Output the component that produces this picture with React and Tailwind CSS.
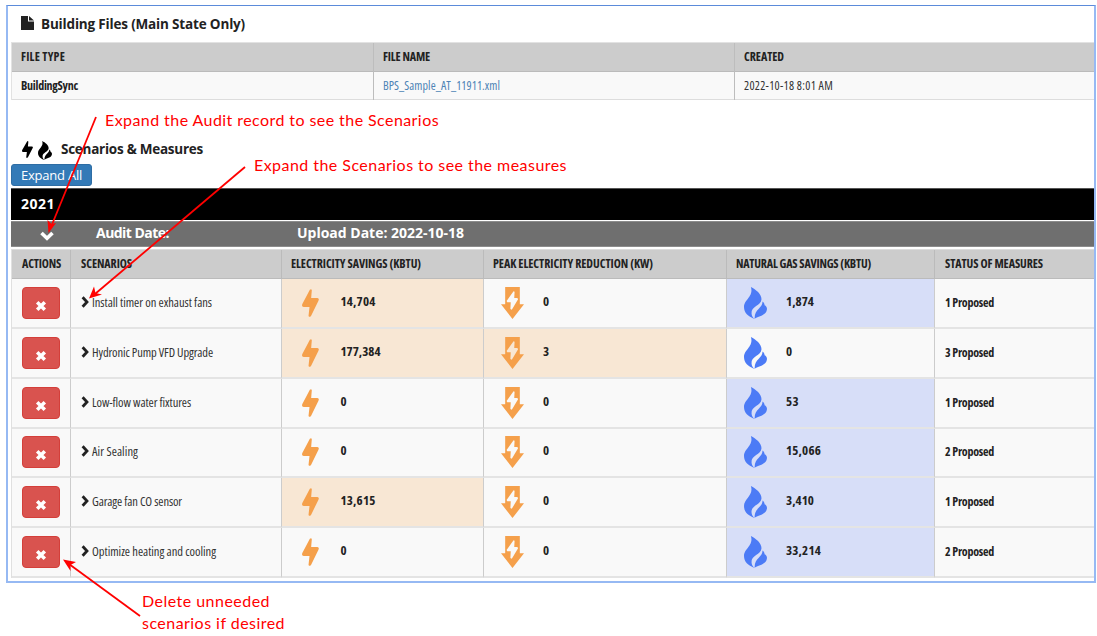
import React, { useLayoutEffect, useRef, useState } from "react";

/* Tracks a run of text so that it spans the given width. */
function Fit({ w, className = "", children }) {
  const ref = useRef(null);
  const [spacing, setSpacing] = useState(0);
  useLayoutEffect(() => {
    const natural = ref.current.getBoundingClientRect().width - spacing * children.length;
    setSpacing((w - natural) / children.length);
  }, [w, children]);
  return (
    <span ref={ref} className={"inline-block whitespace-nowrap " + className} style={{ letterSpacing: spacing }}>
      {children}
    </span>
  );
}

const Bolt = ({ className }) => (
  <svg viewBox="0 0 52 84" className={className} preserveAspectRatio="none">
    <path fill="currentColor" d="M24 2Q29-2 30 4L28 27H47Q54 28 50 36L28 80Q22 87 20 80L23 54H5Q-2 53 1 45Z" />
  </svg>
);

const Flame = ({ className }) => (
  <svg viewBox="0 0 67 97" className={className} preserveAspectRatio="none">
    <path fill="currentColor" d="M20 0C35 8 51 21 51 37C50 57 20 58 22 80C22 86 26 92 30 97C12 89 0 79 0 61C0 38 29 29 20 0Z" />
    <path fill="currentColor" d="M54 44C54 66 30 65 31 97C38 88 66 88 67 67C67 61 64 57 60 55C60 51 58 47 54 44Z" />
  </svg>
);

const DownBolt = ({ className }) => (
  <svg viewBox="0 0 66 96" className={className} preserveAspectRatio="none">
    <path fill="currentColor" fillRule="evenodd" d="M12 0H54V52H66L33 96L0 52H12ZM36 13L16 42L18 46H28L27 66L31 68L49 37L47 33H38L39 14Z" />
  </svg>
);

const Cross = () => (
  <svg viewBox="0 0 12 12" className="mt-[5px] h-3 w-3">
    <path d="M2.2 2.2L9.8 9.8M9.8 2.2L2.2 9.8" stroke="#fff" strokeWidth="3.5" />
  </svg>
);

const Chevron = () => (
  <svg viewBox="0 0 8 12" className="mr-[3px] mb-[19px] h-3 w-2">
    <path d="M1.6 1.2L6 6L1.6 10.8" fill="none" stroke="#222" strokeWidth="2.8" />
  </svg>
);

const NARROW = "[font-stretch:75%]";
const CELL = "flex shrink-0 items-end border-r border-b-2 border-r-[#ccc] border-b-[#e4e4e4]";

const rows = [
  { name: "Install timer on exhaust fans", nw: 120, h: "h-[50px]", e: "14,704", ew: 35, p: "0", g: "1,874", gw: 28, s: "1 Proposed" },
  { name: "Hydronic Pump VFD Upgrade", nw: 121, h: "h-[50px]", e: "177,384", ew: 40, p: "3", g: "0", gw: 7, s: "3 Proposed" },
  { name: "Low-flow water fixtures", nw: 99, h: "h-[50px]", e: "0", ew: 7, p: "0", g: "53", gw: 13, s: "1 Proposed" },
  { name: "Air Sealing", nw: 46, h: "h-[49px]", e: "0", ew: 7, p: "0", g: "15,066", gw: 35, s: "2 Proposed" },
  { name: "Garage fan CO sensor", nw: 90, h: "h-[50px]", e: "13,615", ew: 35, p: "0", g: "3,410", gw: 28, s: "1 Proposed" },
  { name: "Optimize heating and cooling", nw: 124, h: "h-[50px]", e: "0", ew: 7, p: "0", g: "33,214", gw: 35, s: "2 Proposed" },
];

const heads = [
  ["ACTIONS", 39, "w-[59px] pl-[10px]"],
  ["SCENARIOS", 51, "w-[211px] pl-[10px]"],
  ["ELECTRICITY SAVINGS (KBTU)", 130, "w-[202px] pl-[9px]"],
  ["PEAK ELECTRICITY REDUCTION (KW)", 160, "w-[243px] pl-[9px]"],
  ["NATURAL GAS SAVINGS (KBTU)", 135, "w-[208px] pl-[9px]"],
  ["STATUS OF MEASURES", 98, "w-[159px] pl-[10px]"],
];

function Value({ w, children }) {
  return <Fit w={w} className="mb-4 text-[13px] leading-5 font-bold">{children}</Fit>;
}

function ScenarioRow({ row }) {
  return (
    <div className={"flex bg-[#f9f9f9] " + row.h}>
      <div className={CELL + " w-[59px] pb-2 pl-[10px]"}>
        <button className="flex h-8 w-[38px] items-center justify-center rounded border border-[#d43f3a] bg-[#d9534f]">
          <Cross />
        </button>
      </div>
      <div className={CELL + " w-[211px] pl-[10px]"}>
        <Chevron />
        <Fit w={row.nw} className="mb-[14px] text-[12.5px] leading-5 text-[#333]">{row.name}</Fit>
      </div>
      <div className={CELL + " w-[202px] pl-[19.5px] " + (row.e !== "0" ? "bg-[#f8e7d4]" : "")}>
        <Bolt className="mr-[22px] mb-[10px] h-7 w-[17px] text-[#f5a04b]" />
        <Value w={row.ew}>{row.e}</Value>
      </div>
      <div className={CELL + " w-[243px] pl-[17px] " + (row.p !== "0" ? "bg-[#f8e7d4]" : "")}>
        <DownBolt className="mr-[19px] mb-2 h-8 w-[23px] text-[#f5a04b]" />
        <Value w={7}>{row.p}</Value>
      </div>
      <div className={CELL + " w-[208px] pl-[17px] " + (row.g !== "0" ? "bg-[#d7def8]" : "")}>
        <Flame className="mr-[19px] mb-2 h-8 w-[23px] text-[#4c7bf6]" />
        <Value w={row.gw}>{row.g}</Value>
      </div>
      <div className="flex w-[159px] items-end border-b-2 border-b-[#e4e4e4] pl-[10px]">
        <Fit w={49} className="mb-[14px] text-[12px] leading-5 font-bold">{row.s}</Fit>
      </div>
    </div>
  );
}

function FilesTable() {
  const columns = [
    ["FILE TYPE", 44, "BuildingSync", 57, "w-[362px]"],
    ["FILE NAME", 47, "BPS_Sample_AT_11911.xml", 117, "w-[361px]"],
    ["CREATED", 40, "2022-10-18 8:01 AM", 89, "w-[360px]"],
  ];
  return (
    <div className={"ml-[3px] flex h-[58px] border-t border-l border-[#e2e2e2] " + NARROW}>
      {columns.map(([head, hw, value, vw, width], i) => (
        <div key={head} className={"shrink-0 " + width + (i < 2 ? " border-r border-[#bdbdbd]" : "")}>
          <div className="flex h-[29px] items-center border-b border-[#bbb] bg-[#ccc] pl-[9px] text-[12px] font-bold">
            <Fit w={hw}>{head}</Fit>
          </div>
          <div className="flex h-7 items-center border-b border-[#ddd] bg-[#f9f9f9] pl-[9px] text-[12px]">
            <Fit w={vw} className={i === 0 ? "font-bold" : i === 1 ? "text-[#4d83b5]" : "text-[#333]"}>{value}</Fit>
          </div>
        </div>
      ))}
    </div>
  );
}

function Callouts() {
  return (
    <div className="font-['Lato',sans-serif] text-[16px] leading-[22px] text-[#f00]">
      <svg className="absolute top-0 left-0 h-[636px] w-[1097px]" viewBox="0 0 1097 636">
        <g stroke="#f00" strokeWidth="1.8">
          <path d="M96 117L51 227" />
          <path d="M245 167L95 294" />
          <path d="M140 616L69 564" />
        </g>
        <g fill="#f00">
          <path d="M48.500 233L47.500 220L51.500 224L56 223Z" />
          <path d="M89 298.500L94 286.500L95.500 293L102 294.500Z" />
          <path d="M63 559.500L76 562L70.500 565L70.500 571Z" />
        </g>
      </svg>
      <div className="absolute top-[109px] left-[105px]"><Fit w={334}>Expand the Audit record to see the Scenarios</Fit></div>
      <div className="absolute top-[154px] left-[254px]"><Fit w={313}>Expand the Scenarios to see the measures</Fit></div>
      <div className="absolute top-[590px] left-[142px] flex flex-col items-start">
        <Fit w={128}>Delete unneeded</Fit>
        <Fit w={143}>scenarios if desired</Fit>
      </div>
    </div>
  );
}

export default function App() {
  return (
    <div className="relative h-[636px] w-[1097px] overflow-hidden bg-white pt-[5px] pl-1.5 font-['Open_Sans',sans-serif] text-[#222]">
      <div className="flex h-[578px] w-[1090px] flex-col overflow-hidden border-2 border-t border-[#96b9f3] border-t-[#5b8bda] bg-white">
        <div className="flex h-9 shrink-0 items-center pl-[13px]">
          <svg viewBox="0 0 13 14" className="mr-[7px] mb-0.5 h-[14px] w-[13px]">
            <path d="M0 0H7V5.500H13V14H0ZM8 0L13 4.500H8Z" fill="#222" />
          </svg>
          <Fit w={204} className="text-[13.500px] font-bold">Building Files (Main State Only)</Fit>
        </div>
        <FilesTable />
        <div className="mt-[39px] flex h-[22px] shrink-0 items-center pl-[14px] text-black">
          <Bolt className="mr-[5px] mb-px h-[17px] w-[11px]" />
          <Flame className="mr-[9px] h-[19px] w-[14px]" />
          <Fit w={142} className="mb-[2px] text-[13.500px] font-bold text-[#222]">Scenarios &amp; Measures</Fit>
        </div>
        <button className="mt-[3px] ml-[3px] flex h-[22px] w-[81px] shrink-0 items-center justify-center rounded-[3px] border border-[#2e6da4] bg-[#337ab7] pt-px text-[13px] text-white">
          <Fit w={61}>Expand All</Fit>
        </button>
        <div className="mt-[2px] ml-[3px] flex h-8 shrink-0 items-center border-t border-[#555] bg-black pb-[2px] pl-[10px] text-[14px] font-bold text-white">
          <Fit w={34}>2021</Fit>
        </div>
        <div className="mt-px ml-[3px] flex h-[26px] shrink-0 items-center border-y border-[#8c8c8c] bg-[#6f6f6f] pl-[29px] text-[14px] font-bold text-white">
          <svg viewBox="0 0 14 10" className="mt-[3px] mr-[42px] h-[10px] w-[14px]">
            <path d="M1.500 2L7 7.300L12.500 2" fill="none" stroke="#fff" strokeWidth="3.600" />
          </svg>
          <Fit w={73} className="mb-[3px]">Audit Date:</Fit>
          <Fit w={167} className="mb-[3px] ml-[128px]">Upload Date: 2022-10-18</Fit>
        </div>
        <div className={"mt-[2px] ml-[3px] shrink-0 border-l border-[#e0e0e0] " + NARROW}>
          <div className="flex h-[30px] border-t border-[#ddd]">
            {heads.map(([label, w, width], i) => (
              <div key={label} className={"flex shrink-0 items-center border-b border-[#bbb] bg-[#ccc] text-[12px] font-bold " + width + (i < 5 ? " border-r" : "")}>
                <Fit w={w}>{label}</Fit>
              </div>
            ))}
          </div>
          {rows.map((row) => <ScenarioRow key={row.name} row={row} />)}
        </div>
      </div>
      <Callouts />
    </div>
  );
}
